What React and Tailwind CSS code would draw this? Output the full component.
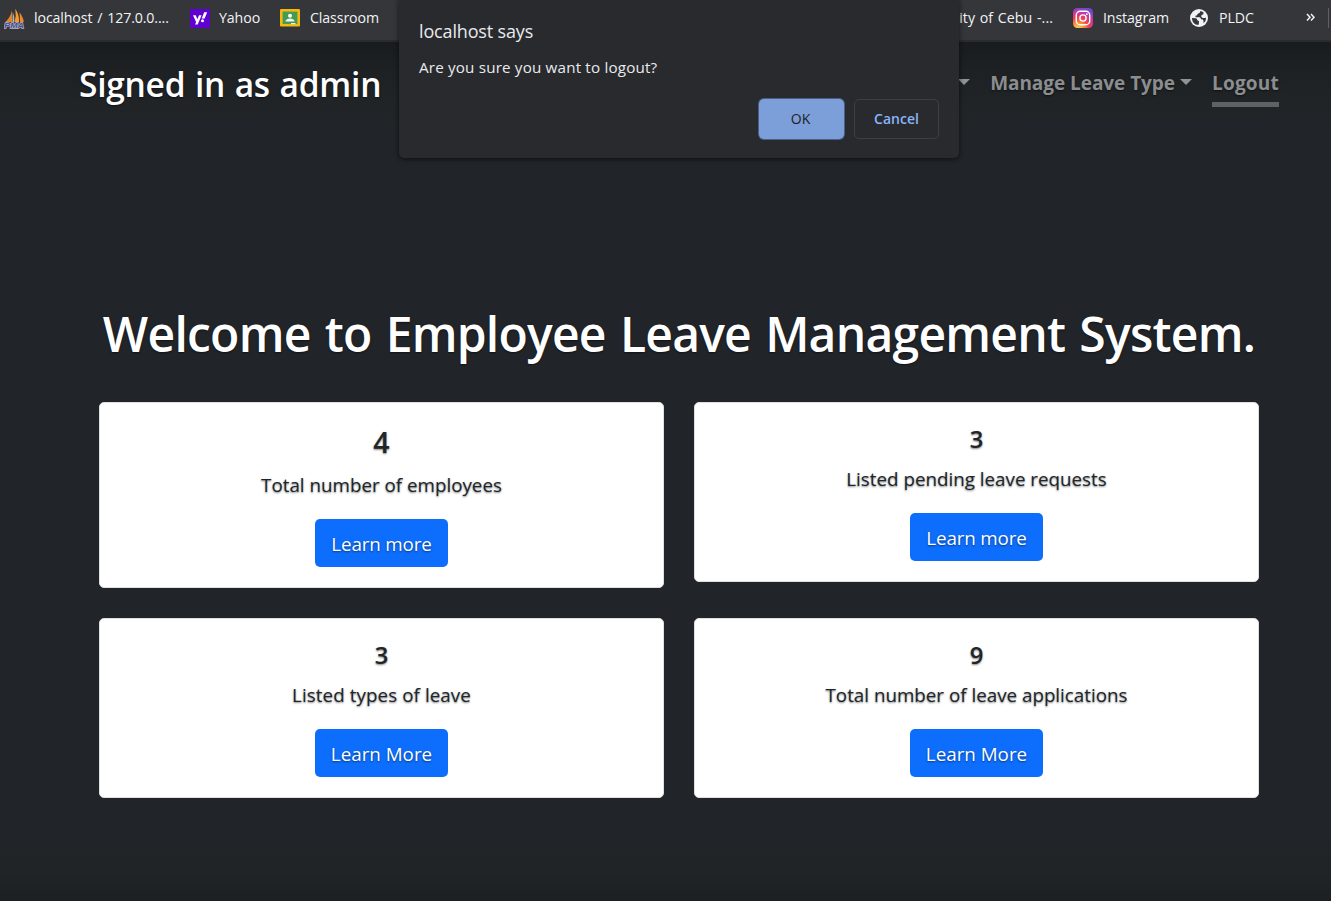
import React from "react";

function SailIcon() {
  return (
    <svg width="21" height="21" viewBox="0 0 21 21" className="shrink-0">
      <path d="M8 2.5 L8.3 14 L1.5 14 Q6.5 9 8 2.5Z" fill="#e0852c" />
      <path d="M8.8 4 Q11 9 10.3 14 L8.5 14Z" fill="#b9b4b4" />
      <path d="M11.3 0.8 Q15.5 7 15 14 L10.6 14 Q12.5 8 11.3 0.8Z" fill="#f59a2c" />
      <path d="M15.6 4.2 Q19.5 10 19.8 14 L16 14Z" fill="#e8892b" />
      <text
        x="0.3"
        y="20"
        textLength="19.6"
        lengthAdjust="spacingAndGlyphs"
        fontFamily="Liberation Sans, sans-serif"
        fontSize="8"
        fontWeight="700"
        fontStyle="italic"
        fill="#4a4a86"
        stroke="#b9b9d4"
        strokeWidth="1.3"
        paintOrder="stroke"
      >
        PMA
      </text>
    </svg>
  );
}

function YahooIcon() {
  return (
    <svg width="20" height="19" viewBox="0 0 20 19" className="shrink-0">
      <rect width="20" height="19" fill="#6001d2" />
      <path d="M3 6.3 H5.7 L7.4 10.2 L9 6.3 H11.6 L7.7 15.6 H5.1 L6.1 13.1Z" fill="#fff" />
      <path d="M14.2 3.3 H17.2 L14.6 9.5 H11.7Z" fill="#fff" />
      <circle cx="12.5" cy="11.7" r="1.5" fill="#fff" />
    </svg>
  );
}

function ClassroomIcon() {
  return (
    <svg width="20" height="18" viewBox="0 0 20 18" className="shrink-0">
      <rect width="20" height="17.5" rx="1.3" fill="#f6b90c" />
      <rect x="2.6" y="2.6" width="14.8" height="12.4" fill="#459a55" />
      <circle cx="10" cy="6.8" r="2" fill="#fff" />
      <path d="M5.6 12.6 V11.6 Q7 9.6 10 9.6 Q13 9.6 14.4 11.6 V12.6Z" fill="#f2f8f3" />
      <rect x="11" y="14" width="4.5" height="1.2" fill="#e8f0e8" />
    </svg>
  );
}

function InstagramIcon() {
  return (
    <svg width="20" height="20" viewBox="0 0 20 20" className="shrink-0">
      <defs>
        <radialGradient id="ig" cx="0.25" cy="1.05" r="1.1">
          <stop offset="0" stopColor="#ffd95a" />
          <stop offset="0.25" stopColor="#fb9a3c" />
          <stop offset="0.5" stopColor="#f0434f" />
          <stop offset="0.75" stopColor="#c936a2" />
          <stop offset="1" stopColor="#6a4bd0" />
        </radialGradient>
      </defs>
      <rect width="20" height="20" rx="4.4" fill="url(#ig)" />
      <rect x="3.3" y="3.3" width="13.4" height="13.4" rx="3.8" fill="none" stroke="#fff" strokeWidth="1.4" />
      <circle cx="10" cy="10" r="3.1" fill="none" stroke="#fff" strokeWidth="1.4" />
      <circle cx="13.8" cy="6.2" r="0.9" fill="#fff" />
    </svg>
  );
}

function GlobeIcon() {
  return (
    <svg width="18" height="18" viewBox="0 0 18 18" className="shrink-0">
      <circle cx="9" cy="9" r="9" fill="#f1f3f4" />
      <path d="M10.3 1.9 Q10.6 3.9 8.6 4.3 L7.3 5.4 Q7 6.6 5.4 6.8 L5.6 8.2 L9.6 8.3 Q11 8.8 11 10.3 L12.9 10.6 Q13.8 12 13.6 14.2 Q16.2 12 16.1 8.7 L14.2 8.9 Q11.9 9.2 11.2 7.4 Q11 5.5 13.1 5.4 L13.6 3.4 Q12.2 2.2 10.3 1.9Z" fill="#35363a" />
      <path d="M1.9 8.9 L5.9 9.2 Q7.4 9.8 7.3 11.3 L8.9 12 Q9.3 14.2 8.4 16.1 Q2.3 15.6 1.9 8.9Z" fill="#35363a" />
    </svg>
  );
}

function Caret({ className }) {
  return (
    <svg width="12" height="6" viewBox="0 0 12 6" className={className}>
      <path d="M0 0H12L6 6Z" fill="#909294" />
    </svg>
  );
}

function Bookmark({ icon, children, className, textClass }) {
  return (
    <div className={`flex items-center shrink-0 gap-[10px] whitespace-nowrap ${className}`}>
      <span className="flex w-[20px] justify-center">{icon}</span>
      <span className={textClass}>{children}</span>
    </div>
  );
}

function StatCard({ value, label, action, large, labelClass, actionClass }) {
  return (
    <div
      className={`flex flex-col items-center rounded-[5px] border border-[#dfdfdf] bg-white text-[#212529] ${
        large ? "h-[186px]" : "h-[180px]"
      }`}
    >
      <div
        className={`font-semibold ${
          large ? "mt-[21px] h-[36px] text-[28.5px] leading-[37px]" : "mt-[20px] h-[31px] text-[23.8px] leading-[32px]"
        }`}
      >
        {value}
      </div>
      <div className={`mt-[10px] h-[30px] whitespace-nowrap leading-[30px] text-[18.8px] ${labelClass}`}>{label}</div>
      <button
        className={`mt-[19px] h-[48px] w-[133px] whitespace-nowrap rounded-[5px] bg-[#0d6efd] pt-[2px] text-[18.8px] text-white text-shadow-[0_1px_2px_rgb(0_0_0/0.5)] ${actionClass}`}
      >
        {action}
      </button>
    </div>
  );
}

export default function App() {
  return (
    <div className="relative flex h-[901px] w-[1331px] flex-col overflow-hidden bg-[#212529] font-['Open_Sans','Noto_Sans',sans-serif] text-white">
      <header className="flex h-[42px] shrink-0 items-start border-b-2 border-[#2b2a2c] bg-[#35363a] pl-[4px] text-[14.2px] text-[#f1f3f4]">
        <Bookmark icon={<SailIcon />} className="h-[36px] w-[186px]" textClass="tracking-[-0.12px] [word-spacing:1.3px]">localhost / 127.0.0....</Bookmark>
        <Bookmark icon={<YahooIcon />} className="h-[36px] w-[90px]" textClass="-ml-px tracking-[-0.1px]">Yahoo</Bookmark>
        <Bookmark icon={<ClassroomIcon />} className="h-[36px] w-[120px]" textClass="tracking-[-0.1px]">Classroom</Bookmark>
        <div className="flex h-[36px] flex-1 items-center justify-end whitespace-nowrap pr-[20px] tracking-[0.08px] [word-spacing:0.8px]">University of Cebu -...</div>
        <Bookmark icon={<InstagramIcon />} className="h-[36px] w-[116px]" textClass="tracking-[-0.1px]">Instagram</Bookmark>
        <Bookmark icon={<GlobeIcon />} className="h-[36px] w-[117px]" textClass="tracking-[-0.1px]">PLDC</Bookmark>
        <svg width="9" height="9" viewBox="0 0 9 9" className="mt-[13px] shrink-0">
          <path d="M1 1L4 4.2L1 7.4M5 1L8 4.2L5 7.4" fill="none" stroke="#f1f3f4" strokeWidth="1.5" />
        </svg>
        <div className="ml-[13px] mr-[2px] mt-[8px] h-[20px] w-px shrink-0 bg-[#5f6064]" />
      </header>

      <main className="flex flex-1 flex-col bg-[linear-gradient(to_bottom,#191c1f_0px,#1d2124_28px,#202427_60px,#212529_90px,#212529_790px,#202427_830px,#1d2023_859px)] text-shadow-[0_1px_2px_rgb(0_0_0/0.5)]">
        <nav className="flex h-[90px] shrink-0 items-start pl-[79px] pr-[52px]">
          <h3 className="mt-[21px] flex-1 whitespace-nowrap text-[33.5px] font-semibold leading-[42px] tracking-[-0.25px] [word-spacing:1.2px]">Signed in as admin</h3>
          <Caret className="mr-[20px] mt-[37px]" />
          <div className="mr-[20px] flex whitespace-nowrap text-[19px] font-bold leading-[30px] text-[#8b8d8f]">
            <span className="mt-[26px] tracking-[-0.05px]">Manage Leave Type</span>
            <Caret className="ml-[5px] mt-[37px]" />
          </div>
          <div className="mt-[26px] h-[39px] w-[67px] whitespace-nowrap border-b-5 border-[#5f6264] text-[19px] font-bold leading-[30px] tracking-[0.2px] text-[#8b8d8f]">Logout</div>
        </nav>

        <section className="mt-[170px] flex flex-col pl-[99px] pr-[72px]">
          <h1 className="h-[60px] whitespace-nowrap text-center text-[48px] font-semibold leading-[64px] tracking-[-0.75px] [word-spacing:2.4px]">
            Welcome to Employee Leave Management System.
          </h1>
          <div className="mt-[40px] grid grid-cols-2 items-start gap-[30px]">
            <StatCard large value="4" label="Total number of employees" action="Learn more" labelClass="" actionClass="tracking-[-0.15px]" />
            <StatCard value="3" label="Listed pending leave requests" action="Learn more" labelClass="" actionClass="tracking-[-0.15px]" />
            <StatCard value="3" label="Listed types of leave" action="Learn More" labelClass="tracking-[0.08px]" actionClass="" />
            <StatCard value="9" label="Total number of leave applications" action="Learn More" labelClass="" actionClass="" />
          </div>
        </section>
      </main>

      <div className="absolute left-[399px] top-0 flex h-[158px] w-[560px] flex-col rounded-b-[5px] bg-[#292a2d] px-[20px] text-[#e8eaed] shadow-[0_1px_4px_1px_rgb(0_0_0/0.45)]">
        <div className="mt-[18px] h-[26px] whitespace-nowrap text-[18px] leading-[26px] tracking-[-0.15px]">localhost says</div>
        <div className="mt-[11px] h-[25px] whitespace-nowrap text-[15.2px] leading-[24px] tracking-[0.18px]">Are you sure you want to logout?</div>
        <div className="mt-[19px] flex justify-end gap-[10px]">
          <button className="h-[40px] w-[85px] rounded-[5px] bg-[#7c9fd9] pb-[2px] pr-[2px] text-[14px] font-medium text-[#202124] shadow-[0_0_0_1px_#4a5f87]">OK</button>
          <button className="h-[40px] w-[85px] rounded-[5px] border border-[#3c4043] pb-[2px] text-[14px] font-semibold text-[#8ab4f8]">Cancel</button>
        </div>
      </div>
    </div>
  );
}
